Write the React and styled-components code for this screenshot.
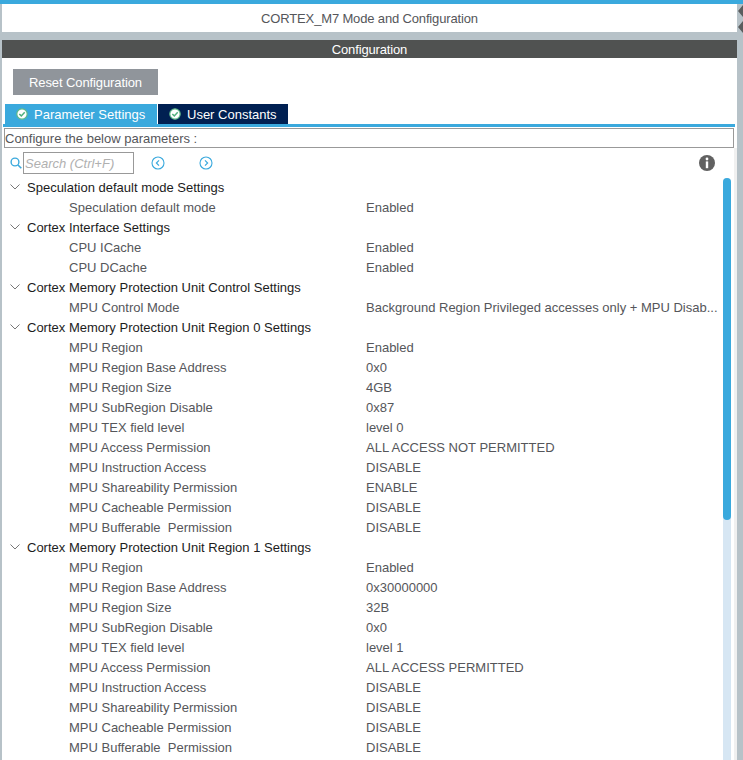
import React from 'react';
import styled, { createGlobalStyle } from 'styled-components';

const GlobalStyle = createGlobalStyle`
  html, body {
    margin: 0;
    padding: 0;
    background: #fff;
    overflow: hidden;
  }
  * {
    box-sizing: border-box;
  }
`;

const Page = styled.div`
  width: 743px;
  height: 760px;
  display: flex;
  flex-direction: column;
  overflow: hidden;
  background: #b7c2c8;
  font-family: 'Liberation Sans', Arial, sans-serif;
  font-size: 13px;
`;

const TopLine = styled.div`
  height: 4px;
  flex: none;
  background: #3aa9dd;
`;

const Body = styled.div`
  flex: 1;
  min-height: 0;
  display: flex;
  padding-left: 2px;
`;

const Main = styled.div`
  width: 735px;
  display: flex;
  flex-direction: column;
  min-height: 0;
`;

const Gutter = styled.div`
  flex: 1;
  overflow: hidden;
  padding: 0 0 0 1px;
`;

const Title = styled.div`
  height: 28px;
  flex: none;
  margin-bottom: 8px;
  display: flex;
  align-items: center;
  justify-content: center;
  background: #fff;
  color: #55565a;
  letter-spacing: -0.15px;
`;

const Header = styled.div`
  height: 18px;
  flex: none;
  display: flex;
  align-items: center;
  justify-content: center;
  background: #505251;
  color: #fff;
  letter-spacing: -0.15px;
`;

const Panel = styled.div`
  flex: 1;
  min-height: 0;
  display: flex;
  flex-direction: column;
  background: #fff;
`;

const ResetButton = styled.button`
  width: 145px;
  height: 26px;
  flex: none;
  margin: 11px 0 9px 11px;
  padding: 0;
  border: 0;
  background: #90959b;
  color: #fff;
  font: inherit;
  letter-spacing: -0.1px;
`;

const Tabs = styled.div`
  display: flex;
  flex: none;
  gap: 1px;
  height: 20px;
  padding-left: 3px;
`;

const Tab = styled.div`
  width: ${p => p.$width}px;
  display: flex;
  align-items: center;
  gap: 6px;
  padding-left: ${p => p.$pad}px;
  background: ${p => p.$active ? '#3aa9dd' : '#002052'};
  color: #fff;
`;

const TabLine = styled.div`
  height: 3px;
  flex: none;
  margin: 0 2px 0 1px;
  background: #3aa9dd;
`;

const ConfigureBox = styled.div`
  height: 20px;
  flex: none;
  margin: 1px 3px 0 2px;
  display: flex;
  align-items: center;
  border: 1px solid #999;
  color: #55565a;
`;

const ContentArea = styled.div`
  flex: 1;
  min-height: 0;
  display: flex;
`;

const Content = styled.div`
  width: 732px;
  flex: none;
  display: flex;
  flex-direction: column;
  min-height: 0;
  background: #fff;
`;

const Edge = styled.div`
  flex: 1;
  background: #f0f0f0;
`;

const Toolbar = styled.div`
  height: 22px;
  flex: none;
  margin-top: 4px;
  display: flex;
  align-items: center;
  padding-left: 8px;
`;

const SearchBox = styled.div`
  width: 111px;
  height: 22px;
  margin-left: 1px;
  padding-left: 1px;
  display: flex;
  align-items: center;
  border: 1px solid #999;
  color: #b0b0b0;
  font-style: italic;
`;

const NavButton = styled.div`
  display: flex;
  margin-left: ${p => p.$gap}px;
`;

const InfoButton = styled.div`
  display: flex;
  margin-left: auto;
  margin-right: 19px;
`;

const TreeArea = styled.div`
  flex: 1;
  min-height: 0;
  margin-top: 3px;
  display: flex;
  overflow: hidden;
`;

const Tree = styled.div`
  flex: 1;
  min-width: 0;
`;

const GroupRow = styled.div`
  height: 20px;
  display: flex;
  align-items: center;
  padding-left: 8px;
  gap: 7px;
  color: #1c1c1c;
`;

const ParamRow = styled.div`
  height: 20px;
  display: flex;
  align-items: center;
  padding-left: 67px;
  color: #55565a;
`;

const ParamName = styled.div`
  width: 297px;
  flex: none;
  white-space: pre;
`;

const ParamValue = styled.div`
  white-space: nowrap;
`;

const ScrollTrack = styled.div`
  width: 8px;
  flex: none;
  margin: 1px 3px 0 0;
  background: #d6e6f3;
  border-radius: 4px 4px 0 0;
`;

const ScrollThumb = styled.div`
  height: 342px;
  background: #3aa9dd;
  border-radius: 4px;
`;

const regionOne = [
  ['MPU Region', 'Enabled'],
  ['MPU Region Base Address', '0x0'],
  ['MPU Region Size', '4GB'],
  ['MPU SubRegion Disable', '0x87'],
  ['MPU TEX field level', 'level 0'],
  ['MPU Access Permission', 'ALL ACCESS NOT PERMITTED'],
  ['MPU Instruction Access', 'DISABLE'],
  ['MPU Shareability Permission', 'ENABLE'],
  ['MPU Cacheable Permission', 'DISABLE'],
  ['MPU Bufferable  Permission', 'DISABLE'],
];

const regionTwo = [
  ['MPU Region', 'Enabled'],
  ['MPU Region Base Address', '0x30000000'],
  ['MPU Region Size', '32B'],
  ['MPU SubRegion Disable', '0x0'],
  ['MPU TEX field level', 'level 1'],
  ['MPU Access Permission', 'ALL ACCESS PERMITTED'],
  ['MPU Instruction Access', 'DISABLE'],
  ['MPU Shareability Permission', 'DISABLE'],
  ['MPU Cacheable Permission', 'DISABLE'],
  ['MPU Bufferable  Permission', 'DISABLE'],
];

const groups = [
  { title: 'Speculation default mode Settings', params: [['Speculation default mode', 'Enabled']] },
  { title: 'Cortex Interface Settings', params: [['CPU ICache', 'Enabled'], ['CPU DCache', 'Enabled']] },
  {
    title: 'Cortex Memory Protection Unit Control Settings',
    params: [['MPU Control Mode', 'Background Region Privileged accesses only + MPU Disab...']],
  },
  { title: 'Cortex Memory Protection Unit Region 0 Settings', params: regionOne },
  { title: 'Cortex Memory Protection Unit Region 1 Settings', params: regionTwo },
];

const CheckIcon = () => (
  <svg width="12" height="12" viewBox="0 0 12 12">
    <circle cx="6" cy="6" r="5.2" fill="#fff" stroke="#5db887" strokeWidth="1.2" />
    <path d="M3.3 6 5.3 7.9 8.7 4.3" fill="none" stroke="#4fb07c" strokeWidth="1.5" />
  </svg>
);

const SearchIcon = () => (
  <svg width="12" height="12" viewBox="0 0 12 12">
    <circle cx="5" cy="5" r="3.9" fill="none" stroke="#3aa9dd" strokeWidth="1.4" />
    <path d="M8 8 11.3 11.3" stroke="#3aa9dd" strokeWidth="1.6" />
  </svg>
);

const ArrowIcon = ({ flip }) => (
  <svg width="14" height="14" viewBox="0 0 14 14">
    <circle cx="7" cy="7" r="6" fill="none" stroke="#3aa9dd" strokeWidth="1.1" />
    <path d={flip ? 'M6 4.4 8.6 7 6 9.6' : 'M8 4.4 5.4 7 8 9.6'} fill="none" stroke="#3aa9dd" strokeWidth="1.2" />
  </svg>
);

const InfoIcon = () => (
  <svg width="16" height="16" viewBox="0 0 16 16">
    <circle cx="8" cy="8" r="8" fill="#616161" />
    <circle cx="8" cy="4" r="1.4" fill="#fff" />
    <rect x="6.8" y="6.4" width="2.4" height="6.8" fill="#fff" />
  </svg>
);

const Chevron = () => (
  <svg width="10" height="6" viewBox="0 0 10 6">
    <path d="M.5.5 5 5 9.5.5" fill="none" stroke="#777" strokeWidth="1" />
  </svg>
);

const CollapseIcon = () => (
  <svg width="5" height="30" viewBox="0 0 5 30">
    <path d="M0 7 5 1V13ZM0 23 5 17V29Z" fill="#5a5d5e" />
  </svg>
);

export default function App() {
  return (
    <Page>
      <GlobalStyle />
      <TopLine />
      <Body>
        <Main>
          <Title>CORTEX_M7 Mode and Configuration</Title>
          <Header>Configuration</Header>
          <Panel>
            <ResetButton>Reset Configuration</ResetButton>
            <Tabs>
              <Tab $active $width={152} $pad={11}><CheckIcon />Parameter Settings</Tab>
              <Tab $width={130} $pad={11}><CheckIcon />User Constants</Tab>
            </Tabs>
            <TabLine />
            <ConfigureBox>Configure the below parameters :</ConfigureBox>
            <ContentArea>
              <Content>
                <Toolbar>
                  <SearchIcon />
                  <SearchBox>Search (Ctrl+F)</SearchBox>
                  <NavButton $gap={17}><ArrowIcon /></NavButton>
                  <NavButton $gap={34}><ArrowIcon flip /></NavButton>
                  <InfoButton><InfoIcon /></InfoButton>
                </Toolbar>
                <TreeArea>
                  <Tree>
                    {groups.map(group => (
                      <div key={group.title}>
                        <GroupRow><Chevron />{group.title}</GroupRow>
                        {group.params.map(([name, value]) => (
                          <ParamRow key={name}>
                            <ParamName>{name}</ParamName>
                            <ParamValue>{value}</ParamValue>
                          </ParamRow>
                        ))}
                      </div>
                    ))}
                  </Tree>
                  <ScrollTrack><ScrollThumb /></ScrollTrack>
                </TreeArea>
              </Content>
              <Edge />
            </ContentArea>
          </Panel>
        </Main>
        <Gutter><CollapseIcon /></Gutter>
      </Body>
    </Page>
  );
}
